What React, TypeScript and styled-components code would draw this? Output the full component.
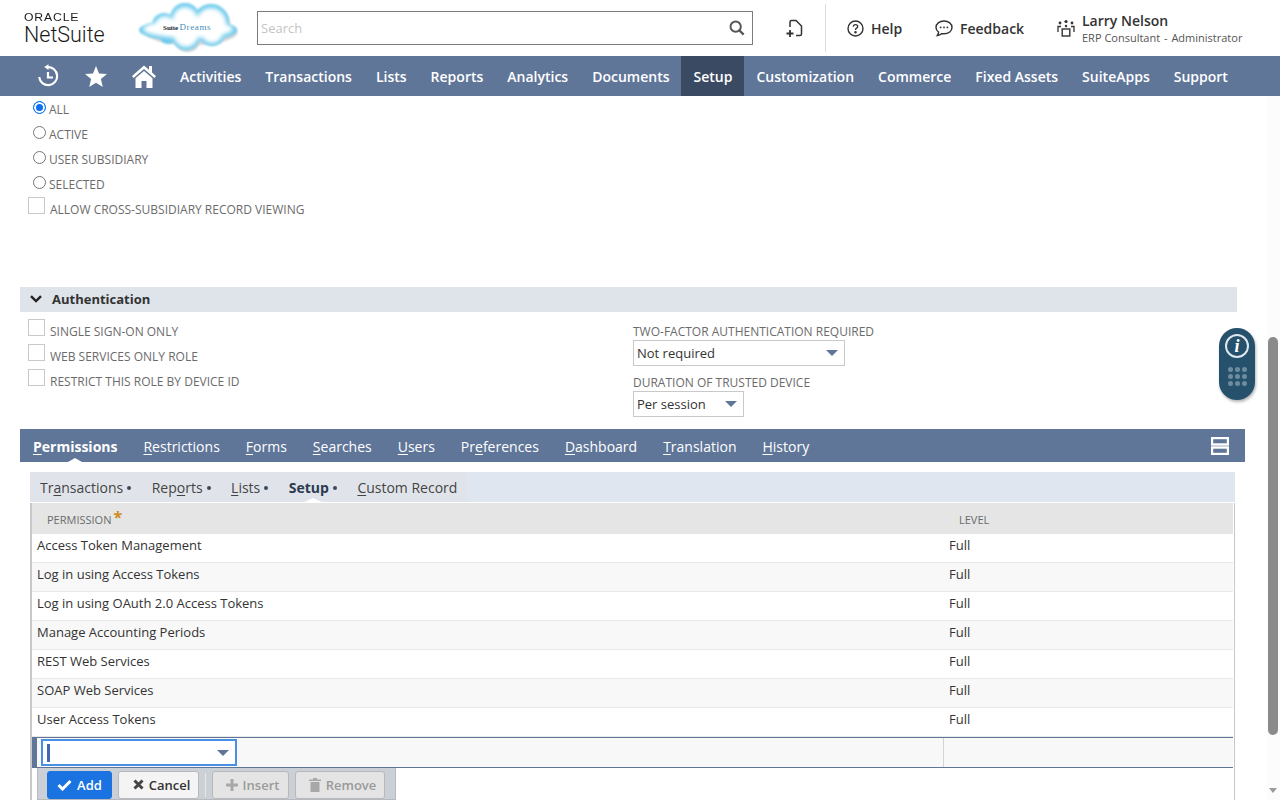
import React from "react";
import styled, { createGlobalStyle } from "styled-components";

const Global = createGlobalStyle`
  html, body { margin: 0; padding: 0; height: 800px; overflow: hidden; background: #fff; }
  body { font-family: "Open Sans", "Liberation Sans", sans-serif; }
  * { box-sizing: border-box; }
`;

const Page = styled.div`
  position: relative;
  width: 1280px;
  height: 800px;
  overflow: hidden;
  background: #fff;
`;

const Header = styled.header`
  display: flex;
  align-items: center;
  height: 56px;
  padding-left: 24px;
`;
const Logo = styled.div`
  width: 114px;
  display: flex;
  flex-direction: column;
  color: #1a1a1a;
  margin-top: 2px;
`;
const LogoOracle = styled.span`
  font-family: "Liberation Sans", Arial, sans-serif;
  font-size: 10px;
  line-height: 10px;
  letter-spacing: 0.7px;
  transform: scaleX(1.22);
  transform-origin: left center;
`;
const LogoNet = styled.span`
  font-family: Roboto, "Liberation Sans", sans-serif;
  font-weight: 300;
  font-size: 21.5px;
  line-height: 23px;
`;
const CloudSvg = styled.svg`
  width: 105px;
  height: 56px;
  flex: none;
`;
const SearchBox = styled.div`
  margin-left: 14px;
  width: 496px;
  height: 34px;
  border: 1px solid #7c7c7c;
  display: flex;
  align-items: center;
  justify-content: space-between;
  padding: 0 7px 0 3px;
  font-size: 13px;
  color: #c4c4c4;
`;
const NewRecord = styled.div`
  width: 72px;
  display: flex;
  justify-content: center;
  padding: 2px 0 0 12px;
`;
const Divider = styled.div`
  width: 1px;
  height: 48px;
  background: #dcdcdc;
`;
const HeadLink = styled.div<{ $w: number }>`
  display: flex;
  align-items: center;
  gap: 7px;
  width: ${(p) => p.$w}px;
  font-size: 14px;
  font-weight: 600;
  color: #333;
`;
const HelpLink = styled(HeadLink)`
  margin-left: 21px;
`;
const UserWrap = styled.div`
  display: flex;
  align-items: center;
  gap: 7px;
`;
const UserText = styled.div`
  display: flex;
  flex-direction: column;
`;
const UserName = styled.span`
  font-size: 14px;
  line-height: 19px;
  font-weight: 600;
  color: #333;
`;
const UserRole = styled.span`
  font-size: 11px;
  line-height: 16px;
  color: #555;
`;
const RoleDash = styled.span`
  margin: 0 1px;
`;

const Nav = styled.nav`
  display: flex;
  height: 40px;
  padding-left: 24px;
  background: #5f7699;
`;
const NavIcon = styled.div`
  width: 48px;
  display: flex;
  align-items: center;
  justify-content: center;
`;
const NavItem = styled.div<{ $active?: boolean }>`
  display: flex;
  align-items: center;
  padding: 0 12px;
  font-size: 14px;
  font-weight: 600;
  color: #fff;
  background: ${(p) => (p.$active ? "#3a4a63" : "transparent")};
`;

const Form = styled.div`
  display: flex;
  flex-direction: column;
`;
const ChoiceList = styled.div`
  display: flex;
  flex-direction: column;
  padding-left: 28px;
  height: 191px;
`;
const RadioRow = styled.div`
  display: flex;
  align-items: center;
  gap: 3px;
  height: 25px;
  padding-left: 5px;
`;
const Radio = styled.span<{ $on?: boolean }>`
  width: 13px;
  height: 13px;
  margin-top: -2px;
  border-radius: 50%;
  flex: none;
  border: 1px solid ${(p) => (p.$on ? "#0a6ff0" : "#767676")};
  background: ${(p) => (p.$on ? "#0a6ff0" : "#fff")};
  box-shadow: ${(p) => (p.$on ? "inset 0 0 0 2px #fff" : "none")};
`;
const FieldLabel = styled.span`
  font-size: 12px;
  line-height: 16px;
  color: #6b6b6b;
  text-transform: uppercase;
  white-space: nowrap;
`;
const RadioLabel = styled(FieldLabel)`
  margin-top: 2px;
`;
const CheckRow = styled.div`
  display: flex;
  align-items: flex-start;
  gap: 5px;
  height: 25px;
`;
const CheckBox = styled.span`
  width: 17px;
  height: 17px;
  margin-top: 1px;
  flex: none;
  border: 1px solid #c9c9c9;
  background: #fff;
`;
const CheckLabel = styled(FieldLabel)`
  margin-top: 6px;
`;
const SectionBar = styled.div`
  display: flex;
  align-items: center;
  gap: 10px;
  margin-left: 20px;
  width: 1217px;
  height: 25px;
  padding: 0 0 2px 10px;
  background: #dfe4eb;
  font-size: 13px;
  font-weight: 700;
  color: #333;
`;
const AuthGrid = styled.div`
  display: flex;
  padding: 6px 0 0 28px;
  height: 117px;
`;
const AuthLeft = styled.div`
  width: 605px;
  display: flex;
  flex-direction: column;
`;
const AuthRight = styled.div`
  display: flex;
  flex-direction: column;
`;
const RightLabel = styled(FieldLabel)<{ $top: number }>`
  margin-top: ${(p) => p.$top}px;
  height: 16px;
`;
const SelectBox = styled.div<{ $w: number }>`
  width: ${(p) => p.$w}px;
  height: 26px;
  margin-bottom: 9px;
  border: 1px solid #c9c9c9;
  display: flex;
  align-items: center;
  justify-content: space-between;
  padding: 0 6px 0 3px;
  font-size: 13px;
  color: #333;
`;
const Arrow = styled.span`
  width: 0;
  height: 0;
  border-left: 6px solid transparent;
  border-right: 6px solid transparent;
  border-top: 6px solid #5f7699;
`;
const TabsBar = styled.div`
  position: relative;
  display: flex;
  align-items: center;
  gap: 26px;
  margin-left: 20px;
  width: 1225px;
  height: 33px;
  padding: 2px 0 0 13px;
  background: #5f7699;
  font-size: 14px;
  color: #fff;
`;
const Tab = styled.span<{ $active?: boolean }>`
  position: relative;
  font-weight: ${(p) => (p.$active ? 700 : 400)};
  u { text-underline-offset: 2px; }
  ${(p) =>
    p.$active
      ? `&::after {
          content: "";
          position: absolute;
          left: 50%;
          bottom: -6px;
          margin-left: -7px;
          border-left: 7px solid transparent;
          border-right: 7px solid transparent;
          border-bottom: 4px solid #fff;
        }`
      : ""}
`;
const TabsIcon = styled.svg`
  position: absolute;
  right: 16px;
  top: 8px;
`;
const Panel = styled.div`
  margin: 10px 0 0 30px;
  width: 1205px;
  border-right: 1px solid #c8c8c8;
  border-left: 2px solid #c8c8c8;
  display: flex;
  flex-direction: column;
`;
const SubTabs = styled.div`
  display: flex;
  height: 31px;
  margin: 0 -1px 0 -2px;
  background: #e0e6f0;
  border-bottom: 1px solid #fff;
`;
const SubInner = styled.div`
  display: flex;
  align-items: center;
  width: 437px;
  padding-left: 10px;
  gap: 20.5px;
  background: #e0e4ea;
  font-size: 14px;
  color: #444;
`;
const SubTab = styled.span<{ $active?: boolean }>`
  position: relative;
  display: flex;
  align-items: center;
  font-weight: ${(p) => (p.$active ? 700 : 400)};
  color: ${(p) => (p.$active ? "#2c3a50" : "#444")};
  white-space: pre;
  u { text-underline-offset: 2px; }
  ${(p) =>
    p.$active
      ? `&::after {
          content: "";
          position: absolute;
          left: 50%;
          bottom: -6px;
          margin-left: -11px;
          border-left: 11px solid transparent;
          border-right: 11px solid transparent;
          border-bottom: 5px solid #fff;
        }`
      : ""}
`;
const SubDot = styled.span`
  width: 4px;
  height: 4px;
  margin: 2px 0 0 4px;
  border-radius: 50%;
  background: #3d4a5e;
`;
const TableHead = styled.div`
  display: grid;
  grid-template-columns: 912px 1fr;
  height: 31px;
  background: #e5e5e5;
  margin-right: 1px;
  padding-top: 1px;
  align-items: center;
  font-size: 11px;
  color: #6b6b6b;
  text-transform: uppercase;
`;
const HeadCell = styled.div`
  padding-left: 15px;
`;
const Star = styled.span`
  display: inline-block;
  margin-left: 2px;
  transform: translateY(-1px);
  color: #d18a1e;
  font-size: 16px;
  line-height: 10px;
  font-weight: 700;
`;
const Row = styled.div<{ $alt: boolean }>`
  display: grid;
  grid-template-columns: 912px 1fr;
  height: 29px;
  padding-top: 2px;
  border-bottom: 1px solid #e8e8e8;
  background: ${(p) => (p.$alt ? "#f8f8f8" : "#fff")};
  font-size: 13px;
  line-height: 18px;
  color: #333;
  margin-right: 1px;
`;
const RowCell = styled.div`
  padding-left: 5px;
`;
const EditRow = styled.div`
  display: grid;
  grid-template-columns: 907px 1fr;
  height: 31px;
  border-top: 1px solid #5f7699;
  border-bottom: 1px solid #5f7699;
  border-left: 5px solid #5f7699;
  background: #f8f8f8;
  margin-right: 1px;
`;
const EditCell = styled.div`
  padding: 1px 0 0 4px;
  border-right: 1px solid #d4d4d4;
`;
const EditInput = styled.div`
  display: flex;
  align-items: center;
  justify-content: space-between;
  width: 196px;
  height: 27px;
  padding: 0 6px 0 4px;
  background: #fff;
  border: 2px solid #4a90e2;
`;
const Caret = styled.span`
  width: 3px;
  height: 18px;
  background: #3f68b5;
`;
const ButtonStrip = styled.div`
  display: flex;
  align-items: center;
  gap: 6px;
  margin-left: 5px;
  width: 359px;
  height: 32px;
  padding: 2px 10px 0 9px;
  background: #cbcfd6;
  border: 1px solid #b5b9c0;
  border-top: none;
`;
const Btn = styled.div<{ $kind: "primary" | "normal" | "off"; $w: number; $shift?: number }>`
  display: flex;
  align-items: center;
  justify-content: center;
  gap: 5px;
  flex: none;
  width: ${(p) => p.$w}px;
  height: 28px;
  padding-left: ${(p) => p.$shift ?? 0}px;
  border-radius: 3px;
  font-size: 13px;
  font-weight: 600;
  border: 1px solid ${(p) => (p.$kind === "primary" ? "#1a73e0" : "#b8b8b8")};
  background: ${(p) =>
    p.$kind === "primary" ? "#1a73e0" : p.$kind === "normal" ? "#f4f4f4" : "#e4e4e4"};
  color: ${(p) => (p.$kind === "primary" ? "#fff" : p.$kind === "normal" ? "#333" : "#9a9a9a")};
`;
const BtnSep = styled.span`
  width: 1px;
  height: 24px;
  background: #e8e8e8;
`;
const Widget = styled.div`
  position: absolute;
  left: 1219px;
  top: 328px;
  width: 36px;
  height: 72px;
  border-radius: 18px;
  background: #25516d;
  box-shadow: 1px 2px 3px rgba(0, 0, 0, 0.3);
  display: flex;
  flex-direction: column;
  align-items: center;
  padding-top: 6px;
`;
const InfoCircle = styled.div`
  width: 24px;
  height: 24px;
  border-radius: 50%;
  border: 2px solid #dfe6ec;
  color: #fff;
  display: flex;
  align-items: center;
  justify-content: center;
  font-family: "Liberation Serif", serif;
  font-style: italic;
  font-weight: 700;
  font-size: 18px;
`;
const Dots = styled.div`
  display: grid;
  grid-template-columns: repeat(3, 5px);
  gap: 2px;
  margin-top: 9px;
`;
const Dot = styled.span`
  width: 5px;
  height: 5px;
  border-radius: 50%;
  background: #6f8b9e;
`;
const Track = styled.div`
  position: absolute;
  left: 1267px;
  top: 96px;
  width: 13px;
  height: 704px;
  background: #fcfcfc;
`;
const Thumb = styled.div`
  position: absolute;
  left: 1px;
  top: 241px;
  width: 10px;
  height: 398px;
  border-radius: 5px;
  background: #8a8a8a;
`;
const TrackArrow = styled.div`
  position: absolute;
  left: 2px;
  bottom: 7px;
  border-left: 4px solid transparent;
  border-right: 4px solid transparent;
  border-top: 5px solid #9a9a9a;
`;

const tabs: [string, string, string][] = [
  ["", "P", "ermissions"],
  ["", "R", "estrictions"],
  ["", "F", "orms"],
  ["", "S", "earches"],
  ["", "U", "sers"],
  ["Pr", "e", "ferences"],
  ["", "D", "ashboard"],
  ["", "T", "ranslation"],
  ["", "H", "istory"],
];
const subTabs: [string, string, string, boolean][] = [
  ["Tr", "a", "nsactions", true],
  ["Rep", "o", "rts", true],
  ["", "L", "ists", true],
  ["", "", "Setup", true],
  ["", "C", "ustom Record", false],
];
const perms = [
  "Access Token Management",
  "Log in using Access Tokens",
  "Log in using OAuth 2.0 Access Tokens",
  "Manage Accounting Periods",
  "REST Web Services",
  "SOAP Web Services",
  "User Access Tokens",
];
const navItems = [
  "Activities", "Transactions", "Lists", "Reports", "Analytics", "Documents", "Setup",
  "Customization", "Commerce", "Fixed Assets", "SuiteApps", "Support",
];

export default function App() {
  return (
    <Page>
      <Global />
      <Header>
        <Logo>
          <LogoOracle>ORACLE</LogoOracle>
          <LogoNet>NetSuite</LogoNet>
        </Logo>
        <CloudSvg viewBox="0 0 105 56">
          <defs>
            <filter id="soft" x="-10%" y="-10%" width="120%" height="120%">
              <feGaussianBlur stdDeviation="0.9" />
            </filter>
            <filter id="softer" x="-10%" y="-10%" width="120%" height="120%">
              <feGaussianBlur stdDeviation="2" />
            </filter>
          </defs>
          <g filter="url(#soft)" fill="#8a9aa5" opacity="0.45" transform="translate(1.5,2)">
            <ellipse cx="52" cy="30" rx="46" ry="13" />
            <circle cx="72" cy="24" r="19" />
            <circle cx="48" cy="37" r="13" />
          </g>
          <g filter="url(#soft)" fill="#6ccbec">
            <ellipse cx="50" cy="30" rx="49" ry="11" />
            <circle cx="26" cy="25" r="12" />
            <circle cx="47" cy="18" r="15" />
            <circle cx="73" cy="22" r="18" />
            <circle cx="48" cy="36" r="14" />
            <circle cx="74" cy="33" r="13" />
            <circle cx="30" cy="35" r="9" />
          </g>
          <g filter="url(#softer)" fill="#fff">
            <ellipse cx="50" cy="29" rx="45" ry="9" />
            <circle cx="27" cy="26" r="10" />
            <circle cx="47" cy="19" r="12" />
            <circle cx="73" cy="23" r="15" />
            <circle cx="48" cy="35" r="12" />
            <circle cx="74" cy="32" r="11" />
          </g>
          <text x="25" y="30" fontFamily="Liberation Serif, serif" fontSize="7" fontWeight="700" fill="#1d2a33">Suite</text>
          <text x="41.5" y="30" fontFamily="Liberation Serif, serif" fontSize="9" letterSpacing="0.6" fill="#3f8fb8">Dreams</text>
        </CloudSvg>
        <SearchBox>
          Search
          <svg width="16" height="16" viewBox="0 0 18 18" fill="none" stroke="#555" strokeWidth="2.2">
            <circle cx="7.5" cy="7.5" r="5.8" />
            <path d="M11.5 11.5 L16.5 16.5" strokeWidth="2.6" />
          </svg>
        </SearchBox>
        <NewRecord>
          <svg width="18" height="20" viewBox="0 0 18 20" fill="none" stroke="#333" strokeWidth="1.5">
            <path d="M4 8 V3 Q4 1.5 5.5 1.5 H10 L15.5 7 V15 Q15.5 16.5 14 16.5 H10" />
            <path d="M4 11 V18 M0.5 14.5 H7.5" strokeWidth="1.8" />
          </svg>
        </NewRecord>
        <Divider />
        <HelpLink $w={88}>
          <svg width="17" height="17" viewBox="0 0 17 17" fill="none" stroke="#333" strokeWidth="1.4">
            <circle cx="8.5" cy="8.5" r="7.5" />
            <path d="M6.3 6.6 Q6.4 4.6 8.5 4.6 Q10.7 4.6 10.7 6.5 Q10.7 7.6 9.6 8.2 Q8.5 8.8 8.5 10" />
            <circle cx="8.5" cy="12.3" r="0.6" fill="#333" />
          </svg>
          Help
        </HelpLink>
        <HeadLink $w={122}>
          <svg width="18" height="17" viewBox="0 0 18 17" fill="none" stroke="#333" strokeWidth="1.4">
            <path d="M9 1 C4.4 1 1 3.8 1 7.4 C1 9.4 2 11 3.6 12.1 C3.6 13.4 3.1 14.6 2.2 15.6 C4.2 15.5 5.8 14.7 6.9 13.6 C7.6 13.7 8.3 13.8 9 13.8 C13.6 13.8 17 11 17 7.4 C17 3.8 13.6 1 9 1 Z" />
            <circle cx="5.6" cy="7.4" r="0.9" fill="#333" stroke="none" />
            <circle cx="9" cy="7.4" r="0.9" fill="#333" stroke="none" />
            <circle cx="12.4" cy="7.4" r="0.9" fill="#333" stroke="none" />
          </svg>
          Feedback
        </HeadLink>
        <UserWrap>
          <svg width="18" height="18" viewBox="0 0 18 18" fill="#333" stroke="none">
            <circle cx="9" cy="2.5" r="1.6" />
            <circle cx="3" cy="4" r="1.4" />
            <circle cx="15" cy="4" r="1.4" />
            <circle cx="9" cy="7" r="1.2" />
            <path d="M1 13 V7.5 H4 M17 13 V7.5 H14" fill="none" stroke="#333" strokeWidth="1.3" />
            <rect x="5.2" y="10" width="7.6" height="7" fill="none" stroke="#333" strokeWidth="1.4" />
          </svg>
          <UserText>
            <UserName>Larry Nelson</UserName>
            <UserRole>ERP Consultant <RoleDash>-</RoleDash> Administrator</UserRole>
          </UserText>
        </UserWrap>
      </Header>
      <Nav>
        <NavIcon>
          <svg width="24" height="24" viewBox="0 0 24 24" fill="none" stroke="#fff" strokeWidth="2.2">
            <path d="M3.2 13 A9 9 0 1 0 11.5 3.1" />
            <path d="M12.5 0.2 L8.2 3 L12.5 6 Z" fill="#fff" stroke="none" />
            <path d="M12 8 V13.5 H17" />
          </svg>
        </NavIcon>
        <NavIcon>
          <svg width="22" height="21" viewBox="0 0 22 21" fill="#fff">
            <path d="M11 0 L14 7.4 L22 8 L15.9 13 L17.8 21 L11 16.8 L4.2 21 L6.1 13 L0 8 L8 7.4 Z" />
          </svg>
        </NavIcon>
        <NavIcon>
          <svg width="24" height="23" viewBox="0 0 24 23" fill="#fff">
            <path d="M12 0.5 L0 11 L1.6 13 L12 4 L22.4 13 L24 11 L20 7.5 V1 H17 V4.8 Z" />
            <path d="M12 6 L3.5 13.3 V23 H9.5 V16 H14.5 V23 H20.5 V13.3 Z" />
          </svg>
        </NavIcon>
        {navItems.map((n) => (
          <NavItem key={n} $active={n === "Setup"}>{n}</NavItem>
        ))}
      </Nav>
      <Form>
        <ChoiceList>
          <RadioRow><Radio $on /><RadioLabel>All</RadioLabel></RadioRow>
          <RadioRow><Radio /><RadioLabel>Active</RadioLabel></RadioRow>
          <RadioRow><Radio /><RadioLabel>User Subsidiary</RadioLabel></RadioRow>
          <RadioRow><Radio /><RadioLabel>Selected</RadioLabel></RadioRow>
          <CheckRow><CheckBox /><CheckLabel>Allow Cross-Subsidiary Record Viewing</CheckLabel></CheckRow>
        </ChoiceList>
        <SectionBar>
          <svg width="12" height="8" viewBox="0 0 12 8" fill="none" stroke="#222" strokeWidth="2.4">
            <path d="M1 1.2 L6 6 L11 1.2" />
          </svg>
          Authentication
        </SectionBar>
        <AuthGrid>
          <AuthLeft>
            <CheckRow><CheckBox /><CheckLabel>Single Sign-On Only</CheckLabel></CheckRow>
            <CheckRow><CheckBox /><CheckLabel>Web Services Only Role</CheckLabel></CheckRow>
            <CheckRow><CheckBox /><CheckLabel>Restrict This Role By Device ID</CheckLabel></CheckRow>
          </AuthLeft>
          <AuthRight>
            <RightLabel $top={6}>Two-Factor Authentication Required</RightLabel>
            <SelectBox $w={212}>Not required<Arrow /></SelectBox>
            <RightLabel $top={0}>Duration of Trusted Device</RightLabel>
            <SelectBox $w={111}>Per session<Arrow /></SelectBox>
          </AuthRight>
        </AuthGrid>
        <TabsBar>
          {tabs.map(([a, b, c], i) => (
            <Tab key={b + c} $active={i === 0}>{a}<u>{b}</u>{c}</Tab>
          ))}
          <TabsIcon width="18" height="18" viewBox="0 0 18 18" fill="none" stroke="#fff" strokeWidth="2.4">
            <rect x="1" y="1" width="16" height="6.5" />
            <rect x="1" y="10.5" width="16" height="6.5" />
          </TabsIcon>
        </TabsBar>
        <Panel>
          <SubTabs>
            <SubInner>
              {subTabs.map(([a, b, c, dot]) => (
                <SubTab key={c} $active={c === "Setup"}>
                  <span>{a}{b && <u>{b}</u>}{c}</span>{dot && <SubDot />}
                </SubTab>
              ))}
            </SubInner>
          </SubTabs>
          <TableHead>
            <HeadCell>Permission<Star>*</Star></HeadCell>
            <HeadCell>Level</HeadCell>
          </TableHead>
          {perms.map((p, i) => (
            <Row key={p} $alt={i % 2 === 1}>
              <RowCell>{p}</RowCell>
              <RowCell>Full</RowCell>
            </Row>
          ))}
          <EditRow>
            <EditCell>
              <EditInput><Caret /><Arrow /></EditInput>
            </EditCell>
            <div />
          </EditRow>
          <ButtonStrip>
            <Btn $kind="primary" $w={65}>
              <svg width="15" height="12" viewBox="0 0 15 12" fill="none" stroke="#fff" strokeWidth="3">
                <path d="M1.5 6 L5.5 10 L13.5 2" />
              </svg>
              Add
            </Btn>
            <Btn $kind="normal" $w={81} $shift={6}>
              <svg width="11" height="11" viewBox="0 0 11 11" fill="none" stroke="#444" strokeWidth="3">
                <path d="M1.5 1.5 L9.5 9.5 M9.5 1.5 L1.5 9.5" />
              </svg>
              Cancel
            </Btn>
            <BtnSep />
            <Btn $kind="off" $w={77} $shift={4}>
              <svg width="12" height="12" viewBox="0 0 12 12" fill="none" stroke="#a8a8a8" strokeWidth="3">
                <path d="M6 0 V12 M0 6 H12" />
              </svg>
              Insert
            </Btn>
            <Btn $kind="off" $w={90} $shift={5}>
              <svg width="12" height="14" viewBox="0 0 12 14" fill="#a8a8a8">
                <path d="M0 1.5 H4 V0 H8 V1.5 H12 V3 H0 Z M1.5 4 H10.5 V14 H1.5 Z" />
              </svg>
              Remove
            </Btn>
          </ButtonStrip>
        </Panel>
      </Form>
      <Widget>
        <InfoCircle>i</InfoCircle>
        <Dots>
          {Array.from({ length: 9 }, (_, i) => <Dot key={i} />)}
        </Dots>
      </Widget>
      <Track>
        <Thumb />
        <TrackArrow />
      </Track>
    </Page>
  );
}
